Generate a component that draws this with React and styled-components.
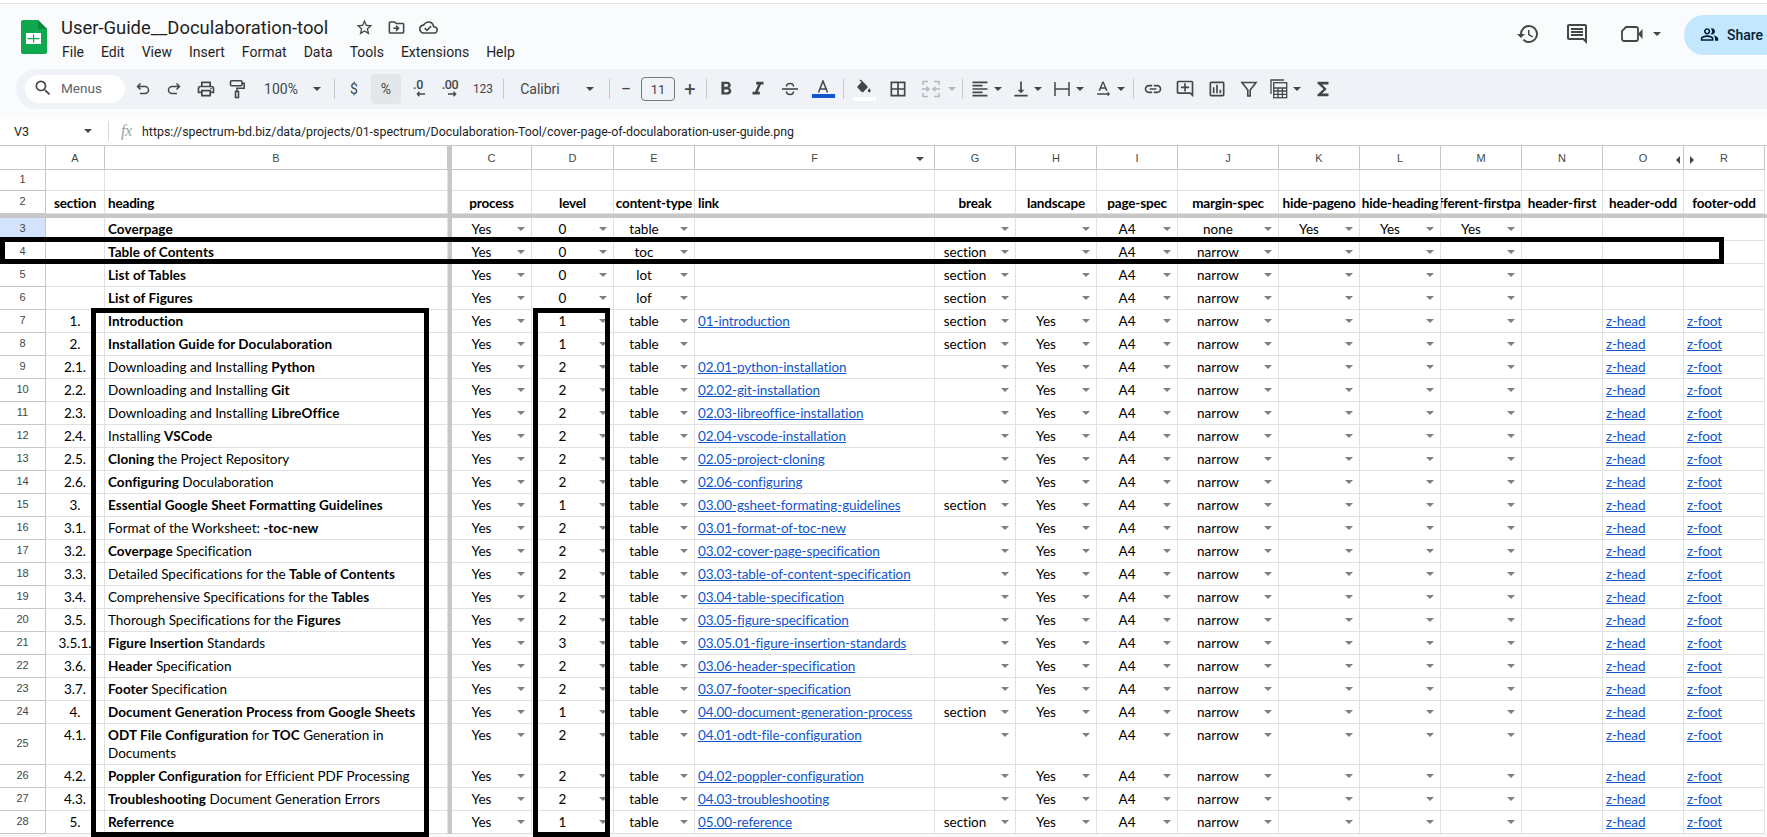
import React from "react";
import styled, { createGlobalStyle } from "styled-components";
import {
  MdSearch, MdOutlinePrint, MdFormatBold, MdFormatItalic,
  MdBorderAll, MdFormatAlignLeft, MdVerticalAlignBottom, MdTextRotationNone, MdLink, MdOutlineAddComment,
  MdOutlineInsertChart, MdFunctions, MdHistory, MdOutlineComment, MdOutlinePeopleAlt, MdStarBorder,
  MdOutlineDriveFileMove, MdOutlineCloudDone,
} from "react-icons/md";

const Global = createGlobalStyle`
  html, body { margin: 0; padding: 0; background: #fff; }
  body { font-family: "Roboto", "Liberation Sans", sans-serif; overflow: hidden; }
`;

const Page = styled.div`
  position: relative; width: 1767px; height: 837px; overflow: hidden;
  background: #fff; display: flex; flex-direction: column;
`;
const TopStrip = styled.div`height: 3px; background: #fff; flex: none;`;
const Chrome = styled.header`
  border-top: 1px solid #e3e3e3; background: #f9fbfd; height: 113px; flex: none;
  display: flex; flex-direction: column;
`;
const TopBar = styled.div`display: flex; height: 65px; flex: none;`;
const Logo = styled.svg`width: 26px; height: 34px; margin: 16px 14px 0 21px; flex: none;`;
const TitleColumn = styled.div`display: flex; flex-direction: column; padding-top: 12px;`;
const TitleRow = styled.div`display: flex; align-items: center; height: 22px;`;
const Title = styled.div`font-size: 18.4px; color: #1f1f1f; width: 276px; white-space: nowrap;`;
const TitleIcon = styled.span`
  display: flex; width: 32px; justify-content: center; color: #444746; font-size: 19px;
  &:first-of-type { margin-left: 11px; }
`;
const MenuRow = styled.nav`display: flex; gap: 17px; margin-top: 4px; margin-left: 1px;`;
const MenuItem = styled.span`font-size: 14px; line-height: 20px; color: #1f1f1f;`;
const TopRight = styled.div`display: flex; flex: 1; justify-content: flex-end; align-items: center; height: 60px;`;
const HeadIcon = styled.span`
  display: flex; justify-content: center; width: 28px; margin-right: ${(p) => p.$mr}px; color: #444746; font-size: 24px;
`;
const ShareButton = styled.div`
  display: flex; align-items: center; gap: 8px; width: 120px; height: 40px; padding-left: 16px; margin: 1px -37px 0 23px;
  box-sizing: border-box; flex: none; background: #c2e7ff; border-radius: 20px; color: #001d35;
  font-size: 14px; font-weight: 500; svg { font-size: 19px; }
`;
const Toolbar = styled.div`
  display: flex; align-items: center; height: 40px; margin-left: 16px; padding-left: 9px; flex: none;
  background: #eff3f8; border-radius: 20px 0 0 20px; color: #444746;
`;
const SearchBox = styled.div`
  display: flex; align-items: center; width: 100px; height: 28px; box-sizing: border-box; padding: 0 0 1px 8px; gap: 8px;
  background: #fff; border-radius: 14px; flex: none; font-size: 13.6px; color: #5f6368; margin-top: -1px; svg { font-size: 20px; color: #444746; }
`;
const Tool = styled.div`
  display: flex; flex-direction: column; align-items: center; justify-content: center; flex: none; height: 30px;
  width: ${(p) => p.$w}px; margin-left: ${(p) => p.$ml}px; font-size: ${(p) => p.$fs || 20}px;
  background: ${(p) => (p.$active ? "#e3e7ea" : "transparent")}; border-radius: 4px;
  color: ${(p) => (p.$muted ? "#b5b8bb" : "#444746")};
`;
const ToolLabel = styled.span`font-size: ${(p) => p.$fs || 13}px; white-space: nowrap; line-height: 1;`;
const Sep = styled.div`width: 1px; height: 20px; background: #c7c7c7; flex: none; margin-left: ${(p) => p.$ml}px;`;
const Caret = styled.div`
  flex: none; width: 0; height: 0; border-left: 4px solid transparent; border-right: 4px solid transparent;
  border-top: 4px solid ${(p) => (p.$muted ? "#b5b8bb" : "#444746")};
`;
const SizeBox = styled.div`
  width: 34px; height: 24px; box-sizing: border-box; border: 1px solid #747775; border-radius: 4px;
  display: flex; align-items: center; justify-content: center; font-size: 13px; color: #444746;
`;
const Swatch = styled.div`width: 23px; height: 4px; background: ${(p) => p.$color}; margin-top: 1px; flex: none;`;
const DecimalTool = styled.div`display: flex; flex-direction: column; align-items: center; line-height: 1;`;
const DecimalText = styled.span`font-size: 12.5px; font-weight: 500; letter-spacing: -0.4px; height: 12px; margin-top: -2px;`;
const DecimalArrow = styled.svg`width: 9px; height: 6px; margin-left: ${(p) => p.$ml || 0}px;`;

const FormulaBar = styled.div`
  display: flex; align-items: center; height: 28px; flex: none; background: #fff; border-bottom: 1px solid #c7c7c7; color: #1f1f1f;
`;
const CellRef = styled.div`width: 70px; margin-left: 14px; font-size: 12.6px; flex: none;`;
const FormulaSep = styled.div`width: 1px; height: 20px; background: #d9d9d9; margin: 0 12px 0 16px; flex: none;`;
const Fx = styled.span`font-family: "Liberation Serif", serif; font-style: italic; font-size: 16px; color: #9aa0a6; width: 21px; flex: none; letter-spacing: -0.5px;`;
const FormulaText = styled.span`font-size: 12.4px; white-space: nowrap; color: #1f1f1f;`;

const Grid = styled.main`background: #fff; flex: none;`;
const GridFoot = styled.div`flex: 1; background: #f7f9f7;`;
const Row = styled.div`
  display: grid; height: ${(p) => p.$h}px; box-sizing: border-box;
  grid-template-columns: 46px 59px 343px 4px 80px 82px 81px 240px 81px 81px 81px 101px 81px 81px 81px 81px 81px 81px;
`;
const FreezeBarH = styled.div`height: 4px; background: #c7c7c7;`;
const FreezeBarV = styled.div`background: #c7c7c7;`;
const CornerCell = styled.div`border-right: 1px solid #c7c7c7; border-bottom: 1px solid #c7c7c7;`;
const ColHead = styled.div`
  position: relative; display: flex; align-items: center; justify-content: center; box-sizing: border-box;
  font-family: "Liberation Sans", Arial, sans-serif; font-size: 11px; color: #444746;
  border-right: 1px solid #c7c7c7; border-bottom: 1px solid #c7c7c7;
`;
const HeadMarker = styled.span`
  position: absolute; top: 10px; ${(p) => p.$side}: ${(p) => p.$off}px; width: 0; height: 0;
  ${(p) => p.$dir === "down"
    ? "border-left:4px solid transparent;border-right:4px solid transparent;border-top:4px solid #444746;top:11px;"
    : p.$dir === "left"
    ? "border-top:4px solid transparent;border-bottom:4px solid transparent;border-right:4px solid #444746;"
    : "border-top:4px solid transparent;border-bottom:4px solid transparent;border-left:4px solid #444746;"}
`;
const RowNum = styled.div`
  display: flex; align-items: center; justify-content: center; box-sizing: border-box; padding-bottom: 2px;
  font-family: "Liberation Sans", Arial, sans-serif; font-size: 11px; color: #444746;
  background: ${(p) => (p.$selected ? "#d3e3fd" : "#fff")};
  border-right: 1px solid #c7c7c7; border-bottom: 1px solid #c7c7c7;
`;
const Cell = styled.div`
  display: flex; align-items: flex-start; box-sizing: border-box; overflow: hidden; padding: 2px 3px 0;
  justify-content: ${(p) => p.$align || "flex-start"}; min-width: 0;
  font-family: "Lato", "Liberation Sans", sans-serif; font-size: 13.5px; line-height: 18px; color: #000;
  letter-spacing: -0.02px;
  border-right: 1px solid #e1e1e1; border-bottom: 1px solid #e1e1e1;
  strong { letter-spacing: 0.05px; }
`;
const HeaderCell = styled(Cell)`font-weight: 700; padding-top: 3px; letter-spacing: -0.18px;`;
const NoWrap = styled.span`white-space: nowrap; flex: none;`;
const DropCell = styled(Cell)`padding: 2px 0 0;`;
const DropValue = styled.span`flex: 1; text-align: center; white-space: nowrap; min-width: 0;`;
const DropArrow = styled.span`
  flex: none; width: 0; height: 0; margin: 7px 6px 0 6px; border-left: 4px solid transparent; border-right: 4px solid transparent;
  border-top: 4px solid #7f7f7f;
`;
const SheetLink = styled.a`color: #1155cc; text-decoration: underline; white-space: nowrap; letter-spacing: -0.1px;`;
const Highlight = styled.div`
  position: absolute; left: ${(p) => p.$x}px; top: ${(p) => p.$y}px; width: ${(p) => p.$w}px; height: ${(p) => p.$h}px;
  box-sizing: border-box; border: 5px solid #000; pointer-events: none;
`;

const Undo = () => (
  <svg width="18" height="18" viewBox="0 0 18 18" fill="none" stroke="currentColor" strokeWidth="1.500">
    <path d="M6.500 3.500L3.500 6.500l3 3M3.500 6.500H11a3.500 3.500 0 0 1 0 7H6" />
  </svg>
);
const Redo = () => (
  <svg width="18" height="18" viewBox="0 0 18 18" fill="none" stroke="currentColor" strokeWidth="1.500">
    <path d="M11.500 3.500l3 3-3 3M14.500 6.500H7a3.500 3.500 0 0 0 0 7h5" />
  </svg>
);
const Roller = () => (
  <svg width="18" height="20" viewBox="0 0 18 20" fill="none" stroke="currentColor" strokeWidth="1.600">
    <rect x="2.500" y="1.800" width="11.500" height="5" rx="1" />
    <path d="M14 4.300h2.200v5H9v3" />
    <rect x="7.500" y="12.500" width="3" height="6" />
  </svg>
);
const Strike = () => (
  <svg width="20" height="20" viewBox="0 0 20 20" fill="none" stroke="currentColor" strokeWidth="1.600">
    <path d="M2 10h16" />
    <path d="M6.500 7.500C6.500 5.500 8 4.500 10 4.500s3.500 1 3.500 3" />
    <path d="M6.500 12.500c0 2 1.500 3 3.500 3s3.500-1 3.500-3" />
  </svg>
);
const TextA = () => (
  <svg width="14" height="13" viewBox="0 0 14 13" fill="none" stroke="currentColor" strokeWidth="1.500"><path d="M2.500 12.500L7 1l4.500 11.500M4 9h6" /></svg>
);
const Bucket = () => (
  <svg width="18" height="18" viewBox="0 0 24 20" fill="currentColor">
    <path d="M16.560 8.940L7.620 0 6.210 1.410l2.380 2.380-5.150 5.150c-.59.59-.59 1.540 0 2.120l5.500 5.500c.29.29.68.44 1.060.44s.77-.15 1.060-.44l5.500-5.500c.59-.58.59-1.530 0-2.120zM19 11.500s-2 2.170-2 3.500c0 1.100.9 2 2 2s2-.9 2-2c0-1.330-2-3.500-2-3.500z" />
  </svg>
);
const MergeIcon = () => (
  <svg width="18" height="18" viewBox="0 0 18 18" fill="none" stroke="currentColor" strokeWidth="1.500">
    <path d="M1 5V1.500h5M1 8v2M6 16.500H1V13M12 1.500h5V5M17 8v2M17 13v3.500h-5" />
    <path d="M2 9h4.500M4.500 6.800L7 9l-2.500 2.200M16 9h-4.500M13.500 6.800L11 9l2.500 2.200" />
  </svg>
);
const WrapIcon = () => (
  <svg width="18" height="18" viewBox="0 0 18 18" fill="none" stroke="currentColor" strokeWidth="1.500"><path d="M2 2v14M16 2v14M2 9h14" /></svg>
);
const Funnel = () => (
  <svg width="18" height="18" viewBox="0 0 18 18" fill="none" stroke="currentColor" strokeWidth="1.600"><path d="M2 2.500h14L10.200 10v6H7.800v-6z" /></svg>
);
const CalcIcon = () => (
  <svg width="18" height="20" viewBox="0 0 18 20" fill="none" stroke="currentColor" strokeWidth="1.300">
    <path d="M1 15V1h13" />
    <rect x="3.700" y="3.700" width="13" height="15" />
    <path d="M3.700 9h13M3.700 12h13M3.700 15.300h13M8 9v9.700M12.400 9v9.700" />
  </svg>
);
const Camera = () => (
  <svg width="24" height="18" viewBox="0 0 24 18" fill="none">
    <path d="M6 2h10a2 2 0 0 1 2 2v10a2 2 0 0 1-2 2H4a2 2 0 0 1-2-2V6z" stroke="currentColor" strokeWidth="1.800" />
    <path d="M18 9l4.500-5v10z" fill="currentColor" />
  </svg>
);
const LeftArrow = () => (
  <DecimalArrow viewBox="0 0 9 6" fill="none" stroke="currentColor" strokeWidth="1.300" $ml={5}><path d="M9 3H1.500M3.500 .8L1.300 3l2.200 2.200" /></DecimalArrow>
);
const RightArrow = () => (
  <DecimalArrow viewBox="0 0 9 6" fill="none" stroke="currentColor" strokeWidth="1.300" $ml={5}><path d="M0 3h7.500M5.500 .8L7.700 3 5.500 5.200" /></DecimalArrow>
);

const toolSpec = [
  { c: 143, w: 24, el: <Undo /> },
  { c: 174, w: 24, el: <Redo /> },
  { c: 206, w: 24, el: <MdOutlinePrint /> },
  { c: 237, w: 24, el: <Roller /> },
  { c: 281, w: 40, el: <ToolLabel $fs={14}>100%</ToolLabel> },
  { c: 317, w: 12, el: <Caret /> },
  { sep: true, c: 334 },
  { c: 354, w: 20, el: <ToolLabel $fs={14}>$</ToolLabel> },
  { c: 386, w: 30, active: true, el: <ToolLabel $fs={14}>%</ToolLabel> },
  { c: 418, w: 28, el: <DecimalTool><DecimalText>.0</DecimalText><LeftArrow /></DecimalTool> },
  { c: 450, w: 28, el: <DecimalTool><DecimalText>.00</DecimalText><RightArrow /></DecimalTool> },
  { c: 483, w: 28, el: <ToolLabel $fs={12}>123</ToolLabel> },
  { sep: true, c: 503 },
  { c: 540, w: 44, el: <ToolLabel $fs={14}>Calibri</ToolLabel> },
  { c: 590, w: 12, el: <Caret /> },
  { sep: true, c: 609 },
  { c: 626, w: 20, el: <ToolLabel $fs={18}>−</ToolLabel> },
  { c: 658, w: 34, el: <SizeBox>11</SizeBox> },
  { c: 690, w: 20, el: <ToolLabel $fs={20}>+</ToolLabel> },
  { sep: true, c: 706 },
  { c: 726, w: 24, fs: 22, el: <MdFormatBold /> },
  { c: 758, w: 24, fs: 22, el: <MdFormatItalic /> },
  { c: 790, w: 24, el: <Strike /> },
  { c: 823, w: 24, el: <><TextA /><Swatch $color="#1155cc" /></> },
  { sep: true, c: 843 },
  { c: 864, w: 24, el: <><Bucket /><Swatch $color="#ffffff" /></> },
  { c: 898, w: 24, el: <MdBorderAll /> },
  { c: 931, w: 24, muted: true, el: <MergeIcon /> },
  { c: 952, w: 12, el: <Caret $muted /> },
  { sep: true, c: 962 },
  { c: 980, w: 24, el: <MdFormatAlignLeft /> },
  { c: 998, w: 12, el: <Caret /> },
  { c: 1021, w: 24, el: <MdVerticalAlignBottom /> },
  { c: 1038, w: 10, el: <Caret /> },
  { c: 1062, w: 24, el: <WrapIcon /> },
  { c: 1080, w: 12, el: <Caret /> },
  { c: 1103, w: 24, el: <MdTextRotationNone /> },
  { c: 1121, w: 12, el: <Caret /> },
  { sep: true, c: 1133 },
  { c: 1153, w: 24, el: <MdLink /> },
  { c: 1185, w: 24, el: <MdOutlineAddComment /> },
  { c: 1217, w: 24, el: <MdOutlineInsertChart /> },
  { c: 1249, w: 24, el: <Funnel /> },
  { c: 1279, w: 24, el: <CalcIcon /> },
  { c: 1297, w: 12, el: <Caret /> },
  { c: 1323, w: 24, fs: 22, el: <MdFunctions /> },
];

const columns = ["A", "B", "C", "D", "E", "F", "G", "H", "I", "J", "K", "L", "M", "N", "O", "R"];
const menus = ["File", "Edit", "View", "Insert", "Format", "Data", "Tools", "Extensions", "Help"];

const heads = [
  ["section", "center"], ["heading", "flex-start"], ["process", "center"], ["level", "center"], ["content-type", "center"], ["link", "flex-start"],
  ["break", "center"], ["landscape", "center"], ["page-spec", "center"], ["margin-spec", "center"], ["hide-pageno", "center"],
  ["hide-heading", "center"], ["different-firstpage", "center"], ["header-first", "center"], ["header-odd", "center"], ["footer-odd", "center"],
];

const rows = [
  [3, "", "**Coverpage**", 0, "table", "", "", "", "none", true],
  [4, "", "**Table of Contents**", 0, "toc", "", "section", "", "narrow"],
  [5, "", "**List of Tables**", 0, "lot", "", "section", "", "narrow"],
  [6, "", "**List of Figures**", 0, "lof", "", "section", "", "narrow"],
  [7, "1.", "**Introduction**", 1, "table", "01-introduction", "section", "Yes", "narrow"],
  [8, "2.", "**Installation Guide for Doculaboration**", 1, "table", "", "section", "Yes", "narrow"],
  [9, "2.1.", "Downloading and Installing **Python**", 2, "table", "02.01-python-installation", "", "Yes", "narrow"],
  [10, "2.2.", "Downloading and Installing **Git**", 2, "table", "02.02-git-installation", "", "Yes", "narrow"],
  [11, "2.3.", "Downloading and Installing **LibreOffice**", 2, "table", "02.03-libreoffice-installation", "", "Yes", "narrow"],
  [12, "2.4.", "Installing **VSCode**", 2, "table", "02.04-vscode-installation", "", "Yes", "narrow"],
  [13, "2.5.", "**Cloning** the Project Repository", 2, "table", "02.05-project-cloning", "", "Yes", "narrow"],
  [14, "2.6.", "**Configuring** Doculaboration", 2, "table", "02.06-configuring", "", "Yes", "narrow"],
  [15, "3.", "**Essential Google Sheet Formatting Guidelines**", 1, "table", "03.00-gsheet-formating-guidelines", "section", "Yes", "narrow"],
  [16, "3.1.", "Format of the Worksheet: **-toc-new**", 2, "table", "03.01-format-of-toc-new", "", "Yes", "narrow"],
  [17, "3.2.", "**Coverpage** Specification", 2, "table", "03.02-cover-page-specification", "", "Yes", "narrow"],
  [18, "3.3.", "Detailed Specifications for the **Table of Contents**", 2, "table", "03.03-table-of-content-specification", "", "Yes", "narrow"],
  [19, "3.4.", "Comprehensive Specifications for the **Tables**", 2, "table", "03.04-table-specification", "", "Yes", "narrow"],
  [20, "3.5.", "Thorough Specifications for the **Figures**", 2, "table", "03.05-figure-specification", "", "Yes", "narrow"],
  [21, "3.5.1.", "**Figure Insertion** Standards", 3, "table", "03.05.01-figure-insertion-standards", "", "Yes", "narrow"],
  [22, "3.6.", "**Header** Specification", 2, "table", "03.06-header-specification", "", "Yes", "narrow"],
  [23, "3.7.", "**Footer** Specification", 2, "table", "03.07-footer-specification", "", "Yes", "narrow"],
  [24, "4.", "**Document Generation Process from Google Sheets**", 1, "table", "04.00-document-generation-process", "section", "Yes", "narrow"],
  [25, "4.1.", "**ODT File Configuration** for **TOC** Generation in Documents", 2, "table", "04.01-odt-file-configuration", "", "", "narrow"],
  [26, "4.2.", "**Poppler Configuration** for Efficient PDF Processing", 2, "table", "04.02-poppler-configuration", "", "Yes", "narrow"],
  [27, "4.3.", "**Troubleshooting** Document Generation Errors", 2, "table", "04.03-troubleshooting", "", "Yes", "narrow"],
  [28, "5.", "**Referrence**", 1, "table", "05.00-reference", "section", "Yes", "narrow"],
];

const Rich = ({ text }) =>
  text.split("**").map((part, i) => (i % 2 ? <strong key={i}>{part}</strong> : <React.Fragment key={i}>{part}</React.Fragment>));

const Drop = ({ value }) => (
  <DropCell>
    <DropValue>{value}</DropValue>
    <DropArrow />
  </DropCell>
);

function Tools() {
  let cursor = 125;
  return toolSpec.map((t, i) => {
    const w = t.sep ? 1 : t.w;
    const ml = t.c - w / 2 - cursor;
    cursor = t.c + w / 2;
    if (t.sep) return <Sep key={i} $ml={ml} />;
    return (
      <Tool key={i} $w={w} $ml={ml} $fs={t.fs} $active={t.active} $muted={t.muted}>
        {t.el}
      </Tool>
    );
  });
}

const HeadCell = ({ t, a }) => <HeaderCell $align={a}><NoWrap>{t}</NoWrap></HeaderCell>;

export default function App() {
  return (
    <Page>
      <Global />
      <TopStrip />
      <Chrome>
        <TopBar>
          <Logo viewBox="0 0 26 34">
            <path d="M2 0h15l9 9v23a2 2 0 0 1-2 2H2a2 2 0 0 1-2-2V2a2 2 0 0 1 2-2z" fill="#0fa84e" />
            <path d="M17 0l9 9h-9z" fill="#0b8a3e" />
            <path d="M5 13h15v11H5z" fill="#fff" />
            <path d="M12 14.500h1.200v8H12zM6.500 18h12v1.200h-12z" fill="#0fa84e" />
          </Logo>
          <TitleColumn>
            <TitleRow>
              <Title>User-Guide__Doculaboration-tool</Title>
              <TitleIcon><MdStarBorder /></TitleIcon>
              <TitleIcon><MdOutlineDriveFileMove /></TitleIcon>
              <TitleIcon><MdOutlineCloudDone /></TitleIcon>
            </TitleRow>
            <MenuRow>
              {menus.map((m) => <MenuItem key={m}>{m}</MenuItem>)}
            </MenuRow>
          </TitleColumn>
          <TopRight>
            <HeadIcon $mr={21}><MdHistory /></HeadIcon>
            <HeadIcon $mr={27}><MdOutlineComment /></HeadIcon>
            <HeadIcon $mr={7}><Camera /></HeadIcon>
            <Caret />
            <ShareButton>
              <MdOutlinePeopleAlt />
              Share
            </ShareButton>
          </TopRight>
        </TopBar>
        <Toolbar>
          <SearchBox><MdSearch />Menus</SearchBox>
          <Tools />
        </Toolbar>
      </Chrome>
      <FormulaBar>
        <CellRef>V3</CellRef>
        <Caret />
        <FormulaSep />
        <Fx>fx</Fx>
        <FormulaText>https://spectrum-bd.biz/data/projects/01-spectrum/Doculaboration-Tool/cover-page-of-doculaboration-user-guide.png</FormulaText>
      </FormulaBar>
      <Grid>
        <Row $h={24}>
          <CornerCell />
          <ColHead>A</ColHead>
          <ColHead>B</ColHead>
          <FreezeBarV />
          {columns.slice(2).map((c) => (
            <ColHead key={c}>
              {c}
              {c === "F" && <HeadMarker $dir="down" $side="right" $off={10} />}
              {c === "O" && <HeadMarker $dir="left" $side="right" $off={3} />}
              {c === "R" && <HeadMarker $dir="right" $side="left" $off={6} />}
            </ColHead>
          ))}
        </Row>
        <Row $h={21}>
          <RowNum>1</RowNum>
          <Cell /><Cell /><FreezeBarV />
          {columns.slice(2).map((c) => <Cell key={c} />)}
        </Row>
        <Row $h={23}>
          <RowNum>2</RowNum>
          {heads.slice(0, 2).map(([t, a]) => <HeadCell key={t} t={t} a={a} />)}
          <FreezeBarV />
          {heads.slice(2).map(([t, a]) => <HeadCell key={t} t={t} a={a} />)}
        </Row>
        <FreezeBarH />
        {rows.map(([n, sec, heading, level, type, link, brk, land, margin, cover]) => (
          <Row key={n} $h={n === 25 ? 41 : 23}>
            <RowNum $selected={n === 3}>{n}</RowNum>
            <Cell $align="center"><NoWrap>{sec}</NoWrap></Cell>
            <Cell><span><Rich text={heading} /></span></Cell>
            <FreezeBarV />
            <Drop value="Yes" />
            <Drop value={level} />
            <Drop value={type} />
            <Cell>{link && <SheetLink href="#">{link}</SheetLink>}</Cell>
            <Drop value={brk} />
            <Drop value={land} />
            <Drop value="A4" />
            <Drop value={margin} />
            <Drop value={cover ? "Yes" : ""} />
            <Drop value={cover ? "Yes" : ""} />
            <Drop value={cover ? "Yes" : ""} />
            <Cell />
            <Cell>{n >= 7 && <SheetLink href="#">z-head</SheetLink>}</Cell>
            <Cell>{n >= 7 && <SheetLink href="#">z-foot</SheetLink>}</Cell>
          </Row>
        ))}
      </Grid>
      <GridFoot />
      <Highlight $x={0} $y={237} $w={1724} $h={27} />
      <Highlight $x={91} $y={308} $w={338} $h={529} />
      <Highlight $x={533} $y={308} $w={77} $h={529} />
    </Page>
  );
}
